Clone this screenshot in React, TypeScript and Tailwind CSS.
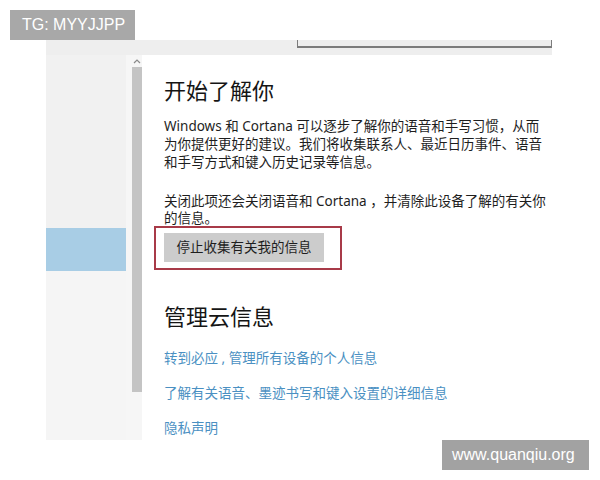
import React from "react";

const cjk = { fontFamily: '"Noto Sans", "Noto Sans CJK SC", sans-serif' };
const latin = { fontFamily: '"Liberation Sans", Arial, sans-serif' };

export default function App() {
  return (
    <div className="w-[600px] h-[480px] bg-white overflow-hidden flex flex-col">
      <div className="pt-[10px] pl-[10px]">
        <div
          className="w-[125px] h-[30px] bg-[#a8a8a8] text-white text-[16px] flex items-center pl-[12px]"
          style={latin}
        >
          TG: MYYJJPP
        </div>
      </div>

      <div className="ml-[46px] w-[506px] h-[400px] flex flex-col" style={cjk}>
        {/* top strip with search box bottom */}
        <div className="h-[15px] bg-[#eeeeee] flex">
          <div className="ml-[251px] w-[255px] h-[8px] border-l border-r border-b-2 border-[#7c7c7c]" />
        </div>

        <div className="flex flex-1">
          {/* left nav */}
          <div className="w-[80px] flex flex-col bg-[#f1f1f1]">
            <div className="h-[173px]" />
            <div className="h-[43px] bg-[#a8cde5]" />
            <div className="flex-1 bg-[#f5f5f5]" />
          </div>

          {/* scrollbar */}
          <div className="w-[16px] flex flex-col bg-[#f6f6f6]">
            <div className="h-[12px] flex justify-end pr-[1px] pt-[3px]">
              <svg width="8" height="6" viewBox="0 0 8 6">
                <path d="M1 5 L4 2 L7 5" fill="none" stroke="#8a8a8a" strokeWidth="1.2" />
              </svg>
            </div>
            <div className="flex justify-end">
              <div className="w-[10px] h-[325px] bg-[#c4c4c4]" />
            </div>
          </div>

          {/* content */}
          <div className="flex-1 bg-white pl-[22px] flex flex-col text-[#1e1e1e]">
            <div className="mt-[21px] text-[22px] leading-[28px] text-[#151515]">开始了解你</div>

            <div className="mt-[13px] text-[13.5px] leading-[18px] whitespace-nowrap">
              <div>Windows 和 Cortana 可以逐步了解你的语音和手写习惯，从而</div>
              <div>为你提供更好的建议。我们将收集联系人、最近日历事件、语音</div>
              <div>和手写方式和键入历史记录等信息。</div>
            </div>

            <div className="mt-[22px] text-[13.5px] leading-[17px] whitespace-nowrap">
              <div>关闭此项还会关闭语音和 Cortana ，并清除此设备了解的有关你</div>
              <div>的信息。</div>
            </div>

            <div className="-ml-[10px] mt-[-1px] w-[188px] h-[44px] border-2 border-[#a83a48] pl-[8px] pt-[5px]">
              <div className="w-[160px] h-[29px] bg-[#cccccc] flex items-center justify-center text-[13.5px] text-[#1e1e1e]">
                停止收集有关我的信息
              </div>
            </div>

            <div className="mt-[32px] text-[22px] leading-[28px] text-[#151515]">管理云信息</div>

            <div className="mt-[19px] flex flex-col gap-[17px] text-[13.5px] leading-[18px] text-[#4a90c2] whitespace-nowrap">
              <div>转到必应 , 管理所有设备的个人信息</div>
              <div>了解有关语音、墨迹书写和键入设置的详细信息</div>
              <div>隐私声明</div>
            </div>
          </div>
        </div>
      </div>

      <div className="ml-[442px] w-[147px] h-[30px] bg-[#a2a2a2] text-white text-[16px] flex items-center pl-[10px]" style={latin}>
        www.quanqiu.org
      </div>
    </div>
  );
}
